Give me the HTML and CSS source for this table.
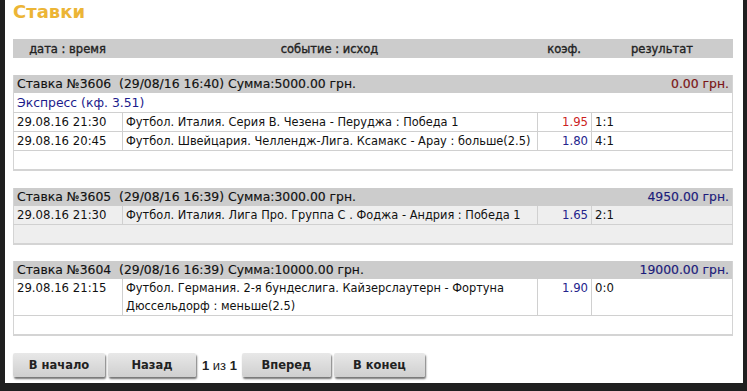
FILE: index.html
```html
<!DOCTYPE html>
<html>
<head>
<meta charset="utf-8">
<link rel="stylesheet" href="styles.css">
</head>
<body>
<div class="panel">
  <h1 class="title">Ставки</h1>
  <table class="head">
    <colgroup><col class="k-date"><col class="k-event"><col class="k-coef"><col></colgroup>
    <tr>
      <td class="h-date">дата : время</td>
      <td class="h-event">событие : исход</td>
      <td class="h-coef">коэф.</td>
      <td class="h-res">результат</td>
    </tr>
  </table>

  <table class="bet">
    <colgroup><col class="k-date"><col class="k-event"><col class="k-coef"><col></colgroup>
    <tr class="bet-head">
      <td colspan="3">Ставка №3606&nbsp; (29/08/16 16:40) Сумма:5000.00 грн.</td>
      <td class="win loss">0.00 грн.</td>
    </tr>
    <tr class="express"><td colspan="4">Экспресс (кф. 3.51)</td></tr>
    <tr class="row">
      <td>29.08.16 21:30</td>
      <td class="c-event">Футбол. Италия. Серия B. Чезена - Перуджа : Победа 1</td>
      <td class="c-coef red">1.95</td>
      <td>1:1</td>
    </tr>
    <tr class="row">
      <td>29.08.16 20:45</td>
      <td class="c-event">Футбол. Швейцария. Челлендж-Лига. Ксамакс - Арау : больше(2.5)</td>
      <td class="c-coef blue">1.80</td>
      <td>4:1</td>
    </tr>
    <tr class="empty"><td colspan="4"></td></tr>
  </table>

  <table class="bet alt">
    <colgroup><col class="k-date"><col class="k-event"><col class="k-coef"><col></colgroup>
    <tr class="bet-head">
      <td colspan="3">Ставка №3605&nbsp; (29/08/16 16:39) Сумма:3000.00 грн.</td>
      <td class="win">4950.00 грн.</td>
    </tr>
    <tr class="row">
      <td>29.08.16 21:30</td>
      <td class="c-event">Футбол. Италия. Лига Про. Группа C . Фоджа - Андрия : Победа 1</td>
      <td class="c-coef blue">1.65</td>
      <td>2:1</td>
    </tr>
    <tr class="empty"><td colspan="4"></td></tr>
  </table>

  <table class="bet">
    <colgroup><col class="k-date"><col class="k-event"><col class="k-coef"><col></colgroup>
    <tr class="bet-head">
      <td colspan="3">Ставка №3604&nbsp; (29/08/16 16:39) Сумма:10000.00 грн.</td>
      <td class="win">19000.00 грн.</td>
    </tr>
    <tr class="row">
      <td>29.08.16 21:15</td>
      <td class="c-event wrap">Футбол. Германия. 2-я бундеслига. Кайзерслаутерн - Фортуна Дюссельдорф : меньше(2.5)</td>
      <td class="c-coef blue">1.90</td>
      <td>0:0</td>
    </tr>
    <tr class="empty"><td colspan="4"></td></tr>
  </table>

  <div class="pager">
    <button class="btn b1">В начало</button>
    <button class="btn b2">Назад</button>
    <span class="pages"><b>1</b> из <b>1</b></span>
    <button class="btn b3">Вперед</button>
    <button class="btn b4">В конец</button>
  </div>
</div>
</body>
</html>
```

FILE: styles.css
```css
html, body {
  margin: 0;
  padding: 0;
  background: #1f1f1f;
  height: 391px;
  overflow: hidden;
}

.panel {
  margin-left: 5px;
  width: 738px;
  height: 383px;
  background: #ffffff;
  box-sizing: border-box;
  padding: 0 10px 0 8px;
  font-family: "DejaVu Sans", Verdana, sans-serif;
  font-size: 11.7px;
  color: #111;
}

.title {
  margin: 0;
  padding: 1px 0 0 0;
  height: 39px;
  box-sizing: border-box;
  font-size: 18px;
  font-weight: bold;
  color: #ecb536;
  line-height: 22px;
}

table {
  width: 720px;
  border-collapse: collapse;
  table-layout: fixed;
}

.k-date { width: 109px; }
.k-event { width: 415px; }
.k-coef { width: 54px; }

.head {
  background: #cccccc;
  margin-bottom: 17px;
}

.head td {
  padding: 0;
  height: 19px;
  font-size: 11.5px;
  color: #222;
  -webkit-text-stroke: 0.35px #222;
}

.h-date { text-align: center; }
.h-event { text-align: center; }
.h-coef { text-align: right; padding-right: 10px !important; }
.h-res { text-align: center; }

.bet {
  margin-bottom: 17px;
  border-bottom: 2px solid #d4d4d4;
  border-left: 1px solid #d4d4d4;
  border-right: 1px solid #d4d4d4;
}

.bet.alt {
  margin-bottom: 16px;
}

.bet td {
  padding: 0 3px;
  height: 18px;
  line-height: 18px;
  white-space: nowrap;
}

.bet-head td {
  background: #cccccc;
  font-size: 12.4px;
  color: #111;
  -webkit-text-stroke: 0.15px #111;
}

.bet-head td.win {
  text-align: right;
  color: #1b1b7a;
  -webkit-text-stroke: 0.15px #1b1b7a;
}

.bet-head td.win.loss {
  color: #7a1414;
  -webkit-text-stroke: 0.15px #7a1414;
}

.express td {
  color: #1c1c8c;
  font-size: 12.4px;
  height: 19px;
  border-bottom: 1px solid #d0d0d0;
}

.row td {
  border: 1px solid #d0d0d0;
  border-top: none;
  vertical-align: top;
}

.row td:first-child { border-left: none; }
.row td:last-child { border-right: none; }

.c-event {
  font-size: 11.4px;
}

.c-event.wrap {
  white-space: normal;
}

.c-coef { text-align: right; }

.red { color: #cc1f1f; }
.blue { color: #24248c; }

.empty td {
  height: 18px;
}

.alt .row td,
.alt .empty td {
  background: #eeeeee;
}

.pager {
  display: flex;
  align-items: center;
  margin-top: 1px;
}

.btn {
  height: 24px;
  border: none;
  border-radius: 2px;
  background: linear-gradient(#e8e8e8, #cfcfcf);
  box-shadow: 1px 2px 2px rgba(0, 0, 0, 0.55);
  font-family: "DejaVu Sans", Verdana, sans-serif;
  font-size: 11.5px;
  font-weight: bold;
  color: #222;
  padding: 0;
  margin-right: 3px;
}

.b1 { width: 92px; }
.b2 { width: 88px; }
.b3 { width: 89px; margin-left: 5px; }
.b4 { width: 91px; }

.pages {
  font-family: "Liberation Sans", Arial, sans-serif;
  font-size: 13px;
  color: #222;
  margin-left: 3px;
}

.pages b { font-weight: bold; }
```
